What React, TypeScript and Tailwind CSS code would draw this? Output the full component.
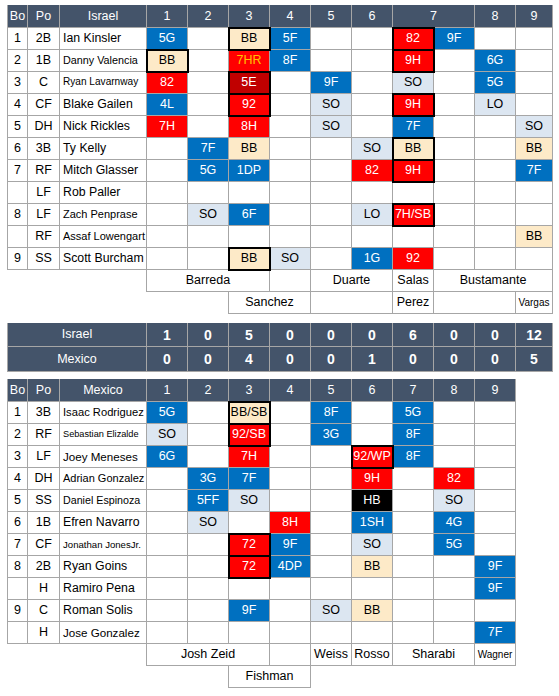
import React from 'react';

type Cell = { t: string; s: string; x?: boolean };
type Row = { bo: string; po: string; name: string; ns: string; cells: Record<number, Cell> };

const c = (t: string, s: string, x = false): Cell => ({ t, s, x });

const FILL: Record<string, string> = {
  b: 'bg-[#0070c0] text-white',
  r: 'bg-[#ff0000] text-white',
  d: 'bg-[#c00000] text-white',
  l: 'bg-[#dce6f1] text-black',
  t: 'bg-[#fdeac8] text-black',
  k: 'bg-black text-white',
  o: 'bg-[#ff0000] text-[#ffc000]',
};

const THICK = 'relative z-10 outline-2 outline-black -outline-offset-1';

const W10 = ['w-[41px]', 'w-[41px]', 'w-[41px]', 'w-[41px]', 'w-[41px]', 'w-[41px]', 'w-[41px]', 'w-[41px]', 'w-[41px]', 'w-[37px]'];
const W9 = ['w-[41px]', 'w-[41px]', 'w-[41px]', 'w-[41px]', 'w-[41px]', 'w-[41px]', 'w-[41px]', 'w-[41px]', 'w-[41px]'];

const N = 'text-[12.3px]';

const israel: Row[] = [
  { bo: '1', po: '2B', name: 'Ian Kinsler', ns: N, cells: { 0: c('5G', 'b'), 2: c('BB', 't', true), 3: c('5F', 'b'), 6: c('82', 'r', true), 7: c('9F', 'b') } },
  { bo: '2', po: '1B', name: 'Danny Valencia', ns: 'text-[10.8px]', cells: { 0: c('BB', 't', true), 2: c('7HR', 'o'), 3: c('8F', 'b'), 6: c('9H', 'r', true), 8: c('6G', 'b') } },
  { bo: '3', po: 'C', name: 'Ryan Lavarnway', ns: 'text-[10.1px]', cells: { 0: c('82', 'r'), 2: c('5E', 'd', true), 4: c('9F', 'b'), 6: c('SO', 'l'), 8: c('5G', 'b') } },
  { bo: '4', po: 'CF', name: 'Blake Gailen', ns: N, cells: { 0: c('4L', 'b'), 2: c('92', 'r', true), 4: c('SO', 'l'), 6: c('9H', 'r', true), 8: c('LO', 'l') } },
  { bo: '5', po: 'DH', name: 'Nick Rickles', ns: N, cells: { 0: c('7H', 'r'), 2: c('8H', 'r'), 4: c('SO', 'l'), 6: c('7F', 'b'), 9: c('SO', 'l') } },
  { bo: '6', po: '3B', name: 'Ty Kelly', ns: N, cells: { 1: c('7F', 'b'), 2: c('BB', 't'), 5: c('SO', 'l'), 6: c('BB', 't', true), 9: c('BB', 't') } },
  { bo: '7', po: 'RF', name: 'Mitch Glasser', ns: N, cells: { 1: c('5G', 'b'), 2: c('1DP', 'b'), 5: c('82', 'r'), 6: c('9H', 'r', true), 9: c('7F', 'b') } },
  { bo: '', po: 'LF', name: 'Rob Paller', ns: N, cells: {} },
  { bo: '8', po: 'LF', name: 'Zach Penprase', ns: 'text-[11px]', cells: { 1: c('SO', 'l'), 2: c('6F', 'b'), 5: c('LO', 'l'), 6: c('7H/SB', 'r', true) } },
  { bo: '', po: 'RF', name: 'Assaf Lowengart', ns: 'text-[11px]', cells: { 9: c('BB', 't') } },
  { bo: '9', po: 'SS', name: 'Scott Burcham', ns: N, cells: { 2: c('BB', 't', true), 3: c('SO', 'l'), 5: c('1G', 'b'), 6: c('92', 'r') } },
];

const mexico: Row[] = [
  { bo: '1', po: '3B', name: 'Isaac Rodriguez', ns: 'text-[11.2px]', cells: { 0: c('5G', 'b'), 2: c('BB/SB', 't', true), 4: c('8F', 'b'), 6: c('5G', 'b') } },
  { bo: '2', po: 'RF', name: 'Sebastian Elizalde', ns: 'text-[9.2px]', cells: { 0: c('SO', 'l'), 2: c('92/SB', 'r', true), 4: c('3G', 'b'), 6: c('8F', 'b') } },
  { bo: '3', po: 'LF', name: 'Joey Meneses', ns: 'text-[11.6px]', cells: { 0: c('6G', 'b'), 2: c('7H', 'r'), 5: c('92/WP', 'r', true), 6: c('8F', 'b') } },
  { bo: '4', po: 'DH', name: 'Adrian Gonzalez', ns: 'text-[11px]', cells: { 1: c('3G', 'b'), 2: c('7F', 'b'), 5: c('9H', 'r'), 7: c('82', 'r') } },
  { bo: '5', po: 'SS', name: 'Daniel Espinoza', ns: 'text-[10.7px]', cells: { 1: c('5FF', 'b'), 2: c('SO', 'l'), 5: c('HB', 'k'), 7: c('SO', 'l') } },
  { bo: '6', po: '1B', name: 'Efren Navarro', ns: N, cells: { 1: c('SO', 'l'), 3: c('8H', 'r'), 5: c('1SH', 'b'), 7: c('4G', 'b') } },
  { bo: '7', po: 'CF', name: 'Jonathan JonesJr.', ns: 'text-[9.6px]', cells: { 2: c('72', 'r', true), 3: c('9F', 'b'), 5: c('SO', 'l'), 7: c('5G', 'b') } },
  { bo: '8', po: '2B', name: 'Ryan Goins', ns: N, cells: { 2: c('72', 'r', true), 3: c('4DP', 'b'), 5: c('BB', 't'), 8: c('9F', 'b') } },
  { bo: '', po: 'H', name: 'Ramiro Pena', ns: N, cells: { 8: c('9F', 'b') } },
  { bo: '9', po: 'C', name: 'Roman Solis', ns: N, cells: { 2: c('9F', 'b'), 4: c('SO', 'l'), 5: c('BB', 't') } },
  { bo: '', po: 'H', name: 'Jose Gonzalez', ns: 'text-[11.6px]', cells: { 8: c('7F', 'b') } },
];

const cellBase = 'shrink-0 flex items-center justify-center border-r border-b border-[#a6a6a6] overflow-visible whitespace-nowrap';

function HeaderRow({ title, cols }: { title: string; cols: { label: string; w: string }[] }) {
  const h = 'bg-[#44546a] text-white text-[12.5px]';
  return (
    <div className="flex h-[23px]">
      <div className={`${cellBase} ${h} border-l w-[21px]`}>Bo</div>
      <div className={`${cellBase} ${h} w-[32px]`}>Po</div>
      <div className={`${cellBase} ${h} w-[87px]`}>{title}</div>
      {cols.map((col, i) => (
        <div key={i} className={`${cellBase} ${h} ${col.w}`}>{col.label}</div>
      ))}
    </div>
  );
}

function PlayerRow({ row, widths }: { row: Row; widths: string[] }) {
  return (
    <div className="flex h-[22px]">
      <div className={`${cellBase} border-l w-[21px] text-[12.5px]`}>{row.bo}</div>
      <div className={`${cellBase} w-[32px] text-[12.5px]`}>{row.po}</div>
      <div className={`${cellBase} w-[87px] justify-start pl-[3px] ${row.ns}`}>{row.name}</div>
      {widths.map((w, i) => {
        const cell = row.cells[i];
        return (
          <div key={i} className={`${cellBase} ${w} text-[12.5px] ${cell ? FILL[cell.s] : ''} ${cell && cell.x ? THICK : ''}`}>
            {cell ? cell.t : ''}
          </div>
        );
      })}
    </div>
  );
}

type Seg = { w: string; t?: string; spacer?: boolean; first?: boolean; small?: boolean };

function PitchRow({ segs }: { segs: Seg[] }) {
  return (
    <div className="flex h-[22px]">
      {segs.map((s, i) =>
        s.spacer ? (
          <div key={i} className={`shrink-0 ${s.w}`} />
        ) : (
          <div key={i} className={`${cellBase} ${s.w} ${s.first ? 'border-l' : ''} ${s.small ? 'text-[10px]' : 'text-[12.5px]'}`}>
            {s.t}
          </div>
        )
      )}
    </div>
  );
}

function ScoreRow({ label, vals, h }: { label: string; vals: string[]; h: string }) {
  const d = 'bg-[#44546a] text-white border-[#9aa3ae]';
  return (
    <div className={`flex ${h}`}>
      <div className={`${cellBase} ${d} border-l w-[140px] text-[12.5px]`}>{label}</div>
      {vals.map((v, i) => (
        <div key={i} className={`${cellBase} ${d} ${W10[i]} text-[14px] font-bold`}>{v}</div>
      ))}
    </div>
  );
}

export default function App() {
  const topCols = [
    { label: '1', w: 'w-[41px]' },
    { label: '2', w: 'w-[41px]' },
    { label: '3', w: 'w-[41px]' },
    { label: '4', w: 'w-[41px]' },
    { label: '5', w: 'w-[41px]' },
    { label: '6', w: 'w-[41px]' },
    { label: '7', w: 'w-[82px]' },
    { label: '8', w: 'w-[41px]' },
    { label: '9', w: 'w-[37px]' },
  ];
  const mexCols = ['1', '2', '3', '4', '5', '6', '7', '8', '9'].map((l) => ({ label: l, w: 'w-[41px]' }));

  return (
    <div className="w-[559px] h-[696px] bg-white pt-[5px] pl-[7px] text-black font-['Liberation_Sans',Arial,sans-serif] leading-none">
      <div className="flex flex-col">
        <HeaderRow title="Israel" cols={topCols} />
        {israel.map((r, i) => (
          <PlayerRow key={i} row={r} widths={W10} />
        ))}
        <PitchRow
          segs={[
            { w: 'w-[139px]', spacer: true },
            { w: 'w-[124px]', t: 'Barreda', first: true },
            { w: 'w-[41px]' },
            { w: 'w-[82px]', t: 'Duarte' },
            { w: 'w-[41px]', t: 'Salas' },
            { w: 'w-[119px]', t: 'Bustamante' },
          ]}
        />
        <PitchRow
          segs={[
            { w: 'w-[221px]', spacer: true },
            { w: 'w-[83px]', t: 'Sanchez', first: true },
            { w: 'w-[82px]' },
            { w: 'w-[41px]', t: 'Perez' },
            { w: 'w-[82px]' },
            { w: 'w-[37px]', t: 'Vargas', small: true },
          ]}
        />
      </div>

      <div className="flex flex-col mt-[9px]">
        <ScoreRow label="Israel" vals={['1', '0', '5', '0', '0', '0', '6', '0', '0', '12']} h="h-[24px]" />
        <ScoreRow label="Mexico" vals={['0', '0', '4', '0', '0', '1', '0', '0', '0', '5']} h="h-[25px]" />
      </div>

      <div className="flex flex-col mt-[7px]">
        <HeaderRow title="Mexico" cols={mexCols} />
        {mexico.map((r, i) => (
          <PlayerRow key={i} row={r} widths={W9} />
        ))}
        <PitchRow
          segs={[
            { w: 'w-[139px]', spacer: true },
            { w: 'w-[124px]', t: 'Josh Zeid', first: true },
            { w: 'w-[41px]' },
            { w: 'w-[41px]', t: 'Weiss' },
            { w: 'w-[41px]', t: 'Rosso' },
            { w: 'w-[82px]', t: 'Sharabi' },
            { w: 'w-[41px]', t: 'Wagner', small: true },
          ]}
        />
        <PitchRow
          segs={[
            { w: 'w-[221px]', spacer: true },
            { w: 'w-[83px]', t: 'Fishman', first: true },
          ]}
        />
      </div>
    </div>
  );
}
